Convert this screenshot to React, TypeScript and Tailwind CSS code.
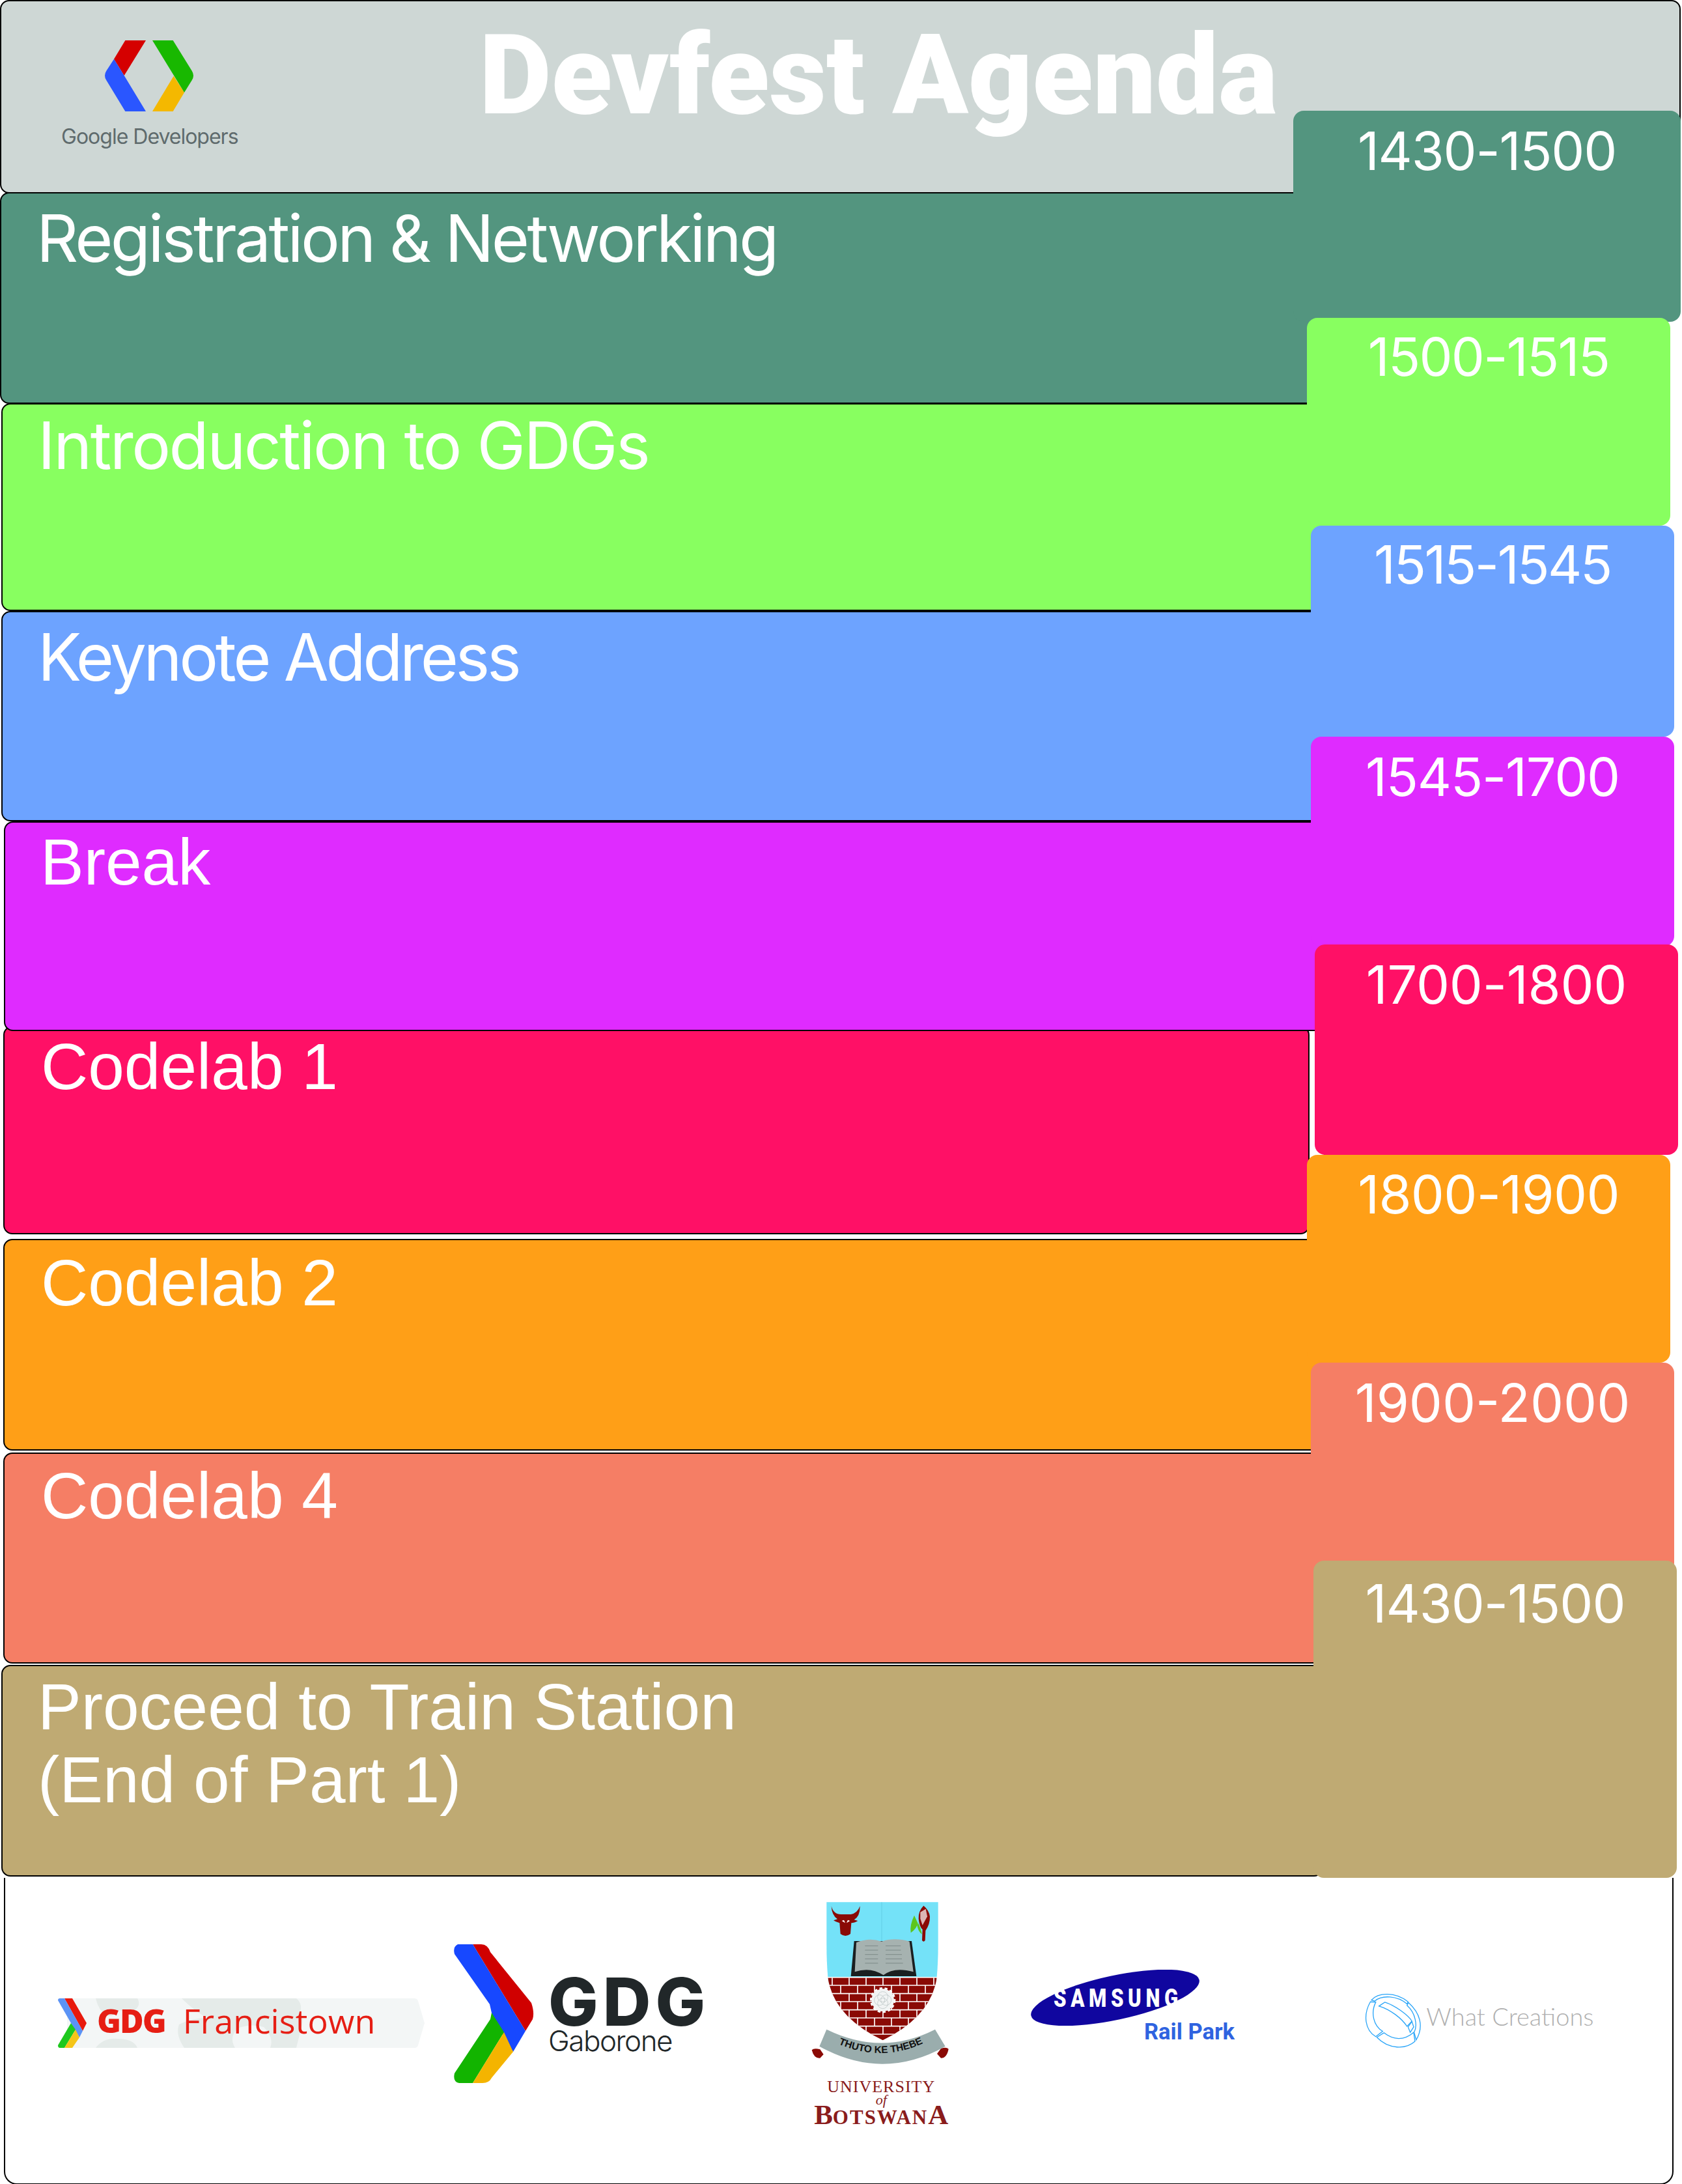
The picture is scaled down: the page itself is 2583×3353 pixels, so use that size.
import React from "react";

const prod = "font-['Inter',sans-serif]";
const arial = "font-['Liberation_Sans',Arial,sans-serif]";

function GoogleDevLogo() {
  return (
    <svg width="340" height="145" viewBox="0 0 1020 435" className="block">
      <path d="M397 96H492L392 258L345 182Z" fill="#D50000" />
      <path d="M345 182L392 258L492 423H397L310 280Q296 258 310 236Z" fill="#2A56FF" />
      <path d="M620 260L669 336L617 423H522Z" fill="#F4B800" />
      <path d="M522 96H617L704 236Q718 258 704 280L669 336Z" fill="#18B800" />
    </svg>
  );
}

function FrancisBanner() {
  return (
    <div className="relative w-[563px] h-[76px] flex items-center">
      <svg width="563" height="76" viewBox="0 0 563 76" className="absolute left-0 top-0">
        <path d="M14 0H547Q552 0 553 4L563 38L553 72Q552 76 547 76H14Z" fill="#F3F6F6" />
        <path d="M58 0H122Q128 10 118 18Q104 22 94 18Q84 30 74 26Q62 18 58 0ZM58 76Q70 60 92 62Q116 62 122 76Z" fill="#E5EBE9" />
        <path d="M190 0H366Q376 8 372 22Q378 30 374 44L366 76H326Q332 60 316 44Q296 38 276 46Q262 60 272 76H194Q180 56 186 40Q206 30 228 30Q206 16 190 0Z" fill="#E5EBE9" />
        <path d="M10 0H22L44 38L38 50Z" fill="#E8190C" />
        <path d="M0 3Q0 0 3 0H10L38 50L33 60L20 38Z" fill="#5B93F5" />
        <path d="M20 38L27 48L10 76H3Q0 76 0 72Z" fill="#1EC81E" />
        <path d="M27 48L33 60L22 76H10Z" fill="#F5C518" />
      </svg>
      <span className="relative ml-[60px] mb-[8px] font-['Open_Sans',sans-serif] font-extrabold text-[50px] leading-[60px] text-[#E61E14] tracking-[-2px]">GDG</span>
      <span className="relative ml-[27px] mb-[8px] font-['Open_Sans',sans-serif] text-[52px] leading-[60px] text-[#E61E14] tracking-[0.2px]">Francistown</span>
    </div>
  );
}

function GdgChevron() {
  return (
    <svg width="123" height="213" viewBox="0 0 123 213" className="block shrink-0">
      <path d="M29 0H42Q52 0 56 12L119 90Q124 105 121 115L110 133Z" fill="#D00000" />
      <path d="M6 0H29L110 133L91 165L60 115Q58 105 55 92L1 15Q-2 4 6 0Z" fill="#1748FF" />
      <path d="M58 105L77 135L29 213H8Q-2 211 1 198L56 115Z" fill="#12B400" />
      <path d="M77 135L91 165L58 205Q54 213 44 213H29Z" fill="#F4B400" />
    </svg>
  );
}

const brickRows = [410, 447, 485, 522, 560, 597, 635, 672];

function Crest() {
  return (
    <svg width="300" height="280" viewBox="0 0 900 840" className="block">
      <defs>
        <clipPath id="shieldLow">
          <path d="M214 412H716Q690 590 467 700Q240 590 214 412Z" />
        </clipPath>
        <path id="mottoPath" d="M235 705Q465 815 680 700" fill="none" />
      </defs>
      <path d="M208 64H722V260Q722 340 716 408H214Q208 340 208 260Z" fill="#74E2F8" />
      <line x1="462" y1="64" x2="462" y2="245" stroke="#5CC4DC" strokeWidth="2" />
      <path d="M230 82Q240 122 278 120H320Q350 115 362 82Q362 130 335 145L352 150Q335 160 322 160L318 210Q295 228 272 210L268 160Q250 155 240 148L258 142Q232 125 230 82Z" fill="#8A0A05" />
      <path d="M278 150L294 160L288 146ZM316 150L300 160L306 146Z" fill="#FFFFFF" />
      <path d="M612 125Q590 170 596 205Q625 185 628 160ZM625 170Q630 200 648 212Q640 180 630 160Z" fill="#5CC61E" />
      <path d="M655 80Q630 105 632 140Q635 175 650 190L648 240Q655 250 662 240L664 195Q685 165 684 130Q680 100 655 80Z" fill="#8A0A05" />
      <path d="M640 110L665 95L672 130L650 170L640 140Z" fill="#F0E0E0" opacity="0.8" />
      <path d="M335 243H600L622 405H320Z" fill="#1A1F20" />
      <path d="M345 250Q405 225 462 245Q520 225 590 245L608 385Q520 360 470 400Q410 360 338 385Z" fill="#A6B2B0" />
      <path d="M385 265H445M385 285H445M385 305H445M385 325H445M385 345H445M480 265H550M480 285H550M480 305H555M480 325H555M480 345H560" stroke="#7D8A88" strokeWidth="3" />
      <g clipPath="url(#shieldLow)">
        <rect x="200" y="405" width="530" height="300" fill="#8A0A05" />
        {brickRows.map((y) => (
          <line key={y} x1="200" y1={y} x2="730" y2={y} stroke="#FFFFFF" strokeWidth="5" />
        ))}
        {brickRows.slice(0, -1).map((y, i) =>
          [0, 1, 2, 3, 4, 5, 6, 7].map((n) => {
            const x = (i % 2 === 0 ? 234 : 195) + n * 78;
            return <line key={`${y}-${n}`} x1={x} y1={y} x2={x} y2={brickRows[i + 1]} stroke="#FFFFFF" strokeWidth="5" />;
          })
        )}
      </g>
      <circle cx="467" cy="515" r="50" fill="#FFFFFF" stroke="#FFFFFF" strokeWidth="18" strokeDasharray="12 10" />
      <circle cx="467" cy="515" r="52" fill="#F2F4F4" />
      <g fill="none" stroke="#B5BFBF" strokeWidth="2">
        <circle cx="467" cy="500" r="24" />
        <circle cx="467" cy="530" r="24" />
        <circle cx="452" cy="515" r="24" />
        <circle cx="482" cy="515" r="24" />
      </g>
      <path d="M140 745Q150 735 178 742L194 765L178 782Q150 785 140 745ZM770 740Q760 730 735 738L717 762L735 782Q762 782 770 740Z" fill="#8A0A05" />
      <path d="M208 650Q462 775 708 650L755 728Q465 890 175 728Z" fill="#9AADAD" />
      <text className="font-['Liberation_Sans',sans-serif] font-bold" fontSize="46" fill="#111111">
        <textPath href="#mottoPath" startOffset="50%" textAnchor="middle">THUTO KE THEBE</textPath>
      </text>
    </svg>
  );
}

function SamsungLogo() {
  return (
    <svg width="330" height="116" viewBox="0 0 330 116" className="block">
      <ellipse cx="129.5" cy="43" rx="132" ry="34" transform="rotate(-12 129.5 43)" fill="#10069F" />
      <text transform="translate(35 57) scale(0.8 1)" textLength="239" lengthAdjust="spacing" fontSize="39" fontWeight="900" fill="#FFFFFF" className="font-['Roboto',sans-serif]">SAMSUNG</text>
      <text x="174" y="107" textLength="139" lengthAdjust="spacingAndGlyphs" fontSize="35" fontWeight="700" fill="#2F63E0" className="font-['Roboto',sans-serif]">Rail Park</text>
    </svg>
  );
}

function WhatRing() {
  return (
    <svg width="87" height="84" viewBox="140 168 262 254" className="block shrink-0" fill="none" stroke="#2AA5F8" strokeWidth="4">
      <path d="M170 200C200 165 280 160 340 208L335 218C290 180 220 175 185 205Z" />
      <path d="M165 208C130 270 140 340 190 370L222 345C180 320 165 260 190 210Z" />
      <path d="M195 373C250 430 330 430 372 392L366 350C320 390 270 385 228 352Z" />
      <path d="M342 212C395 260 415 320 378 385L368 350C385 320 375 260 335 225Z" />
      <path d="M205 228L232 210C280 225 340 270 358 298L335 322C310 285 260 245 205 228Z" />
      <path d="M340 325L358 300L366 325L350 350Z" />
    </svg>
  );
}

const rows = [
  { t: "Registration & Networking", bg: "bg-[#53957F]", cls: `ml-0 h-[325px] pt-[13px] pl-[54px] tracking-[-3.7px] ${prod}` },
  { t: "Introduction to GDGs", bg: "bg-[#88FF60]", cls: `ml-[2px] h-[319px] -mt-px pt-[7px] pl-[54px] tracking-[-2.6px] ${prod}` },
  { t: "Keynote Address", bg: "bg-[#6DA3FF]", cls: `ml-[2px] h-[323px] pt-[13px] pl-[54px] tracking-[-4.4px] ${prod}` },
  { t: "Break", bg: "bg-[#DF2BFF]", cls: `ml-[6px] h-[322px] pt-[4px] pl-[54px] relative z-10 ${arial}` },
  { t: "Codelab 1", bg: "bg-[#FF1066]", cls: `ml-[5px] h-[320px] -mt-[8px] pt-[4px] pl-[56px] w-[2006px]! ${arial}` },
  { t: "Codelab 2", bg: "bg-[#FF9F17]", cls: `ml-[5px] h-[325px] mt-[7px] pt-[9px] pl-[56px] ${arial}` },
  { t: "Codelab 4", bg: "bg-[#F57E65]", cls: `ml-[5px] h-[324px] mt-[3px] pt-[8px] pl-[56px] ${arial}` },
  { t: "Proceed to Train Station\n(End of Part 1)", bg: "bg-[#BFAA73]", cls: `ml-[2px] h-[325px] mt-[2px] pt-[6px] pl-[54px] ${arial}` },
];

const chips = [
  { t: "1430-1500", bg: "bg-[#53957F]", cls: "ml-0 w-[595px] h-[324px] -mt-[125px] pt-[12px] tracking-[-1.2px]" },
  { t: "1500-1515", bg: "bg-[#88FF60]", cls: "ml-[21px] w-[558px] h-[319px] -mt-[6px] pt-[10px] tracking-[-1.7px]" },
  { t: "1515-1545", bg: "bg-[#6DA3FF]", cls: "ml-[27px] w-[558px] h-[324px] pt-[10px] tracking-[-2.4px]" },
  { t: "1545-1700", bg: "bg-[#DF2BFF]", cls: "ml-[27px] w-[558px] h-[322px] pt-[12px] tracking-[-1.2px]" },
  { t: "1700-1800", bg: "bg-[#FF1066]", cls: "ml-[33px] w-[558px] h-[323px] -mt-[3px] pt-[12px] tracking-[-0.2px]" },
  { t: "1800-1900", bg: "bg-[#FF9F17]", cls: "ml-[21px] w-[558px] h-[319px] pt-[11px] tracking-[-0.7px]" },
  { t: "1900-2000", bg: "bg-[#F57E65]", cls: "ml-[27px] w-[558px] h-[323px] pt-[12px]" },
  { t: "1430-1500", bg: "bg-[#BFAA73]", cls: "ml-[31px] w-[558px] h-[487px] -mt-[19px] pt-[16px] tracking-[-1px]" },
];

export default function App() {
  return (
    <div className="w-[2583px] h-[3353px] bg-white overflow-hidden">
      <header className="w-[2581px] h-[297px] -mb-[2px] bg-[#CED7D5] border-2 border-black rounded-[14px] flex items-start">
        <div className="ml-[58px] mt-[28px] w-[340px] shrink-0 flex flex-col">
          <GoogleDevLogo />
          <div className={`${prod} mt-[16px] ml-[34px] text-[32px] leading-[38px] tracking-[-1px] text-[#5F6B6D] whitespace-nowrap`}>Google Developers</div>
        </div>
        <h1 className="ml-[336px] mt-[14px] font-['Roboto',sans-serif] font-black text-[171px] leading-[200px] text-white whitespace-nowrap">Devfest Agenda</h1>
      </header>

      <div className="flex items-start">
        <div className="w-[1986px] shrink-0 flex flex-col">
          {rows.map((r) => (
            <div
              key={r.t}
              className={`w-[2030px] border-2 border-black rounded-[14px] text-white text-[100px] leading-[112px] whitespace-pre ${r.bg} ${r.cls}`}
            >
              {r.t}
            </div>
          ))}
        </div>
        <div className="relative z-20 w-[597px] shrink-0 flex flex-col">
          {chips.map((c, i) => (
            <div
              key={i}
              className={`rounded-[16px] text-white text-center ${prod} font-normal text-[81px] leading-[100px] ${c.bg} ${c.cls}`}
            >
              {c.t}
            </div>
          ))}
        </div>
      </div>

      <footer className="ml-[6px] w-[2564px] h-[471px] bg-white border-x-2 border-b-2 border-black rounded-b-[20px] flex items-start">
        <div className="ml-[81px] mt-[185px] shrink-0">
          <FrancisBanner />
        </div>
        <div className="ml-[45px] mt-[102px] shrink-0 flex items-start">
          <GdgChevron />
          <div className="ml-[22px] mt-[50px] flex flex-col">
            <span className={`${prod} font-extrabold text-[102px] leading-[76px] tracking-[7px] text-[#212729]`}>GDG</span>
            <span className={`${prod} font-light text-[44px] leading-[44px] tracking-[-1.5px] text-[#212729]`}>Gaborone</span>
          </div>
        </div>
        <div className="ml-[110px] mt-[16px] w-[300px] shrink-0 flex flex-col items-center font-['Liberation_Serif',serif] text-[#8A1C1C]">
          <Crest />
          <div className="ml-[6px] mt-[14px] text-[26px] leading-[22px] tracking-[1px] whitespace-nowrap">UNIVERSITY</div>
          <div className="ml-[6px] italic text-[22px] leading-[18px]">of</div>
          <div className="ml-[6px] text-[43px] leading-[28px] whitespace-nowrap font-semibold">
            B<span className="text-[31px] tracking-[2px]">OTSWAN</span>A
          </div>
        </div>
        <div className="ml-[83px] mt-[141px] shrink-0">
          <SamsungLogo />
        </div>
        <div className="ml-[183px] mt-[177px] shrink-0 flex items-start">
          <WhatRing />
          <span className="ml-[7px] mt-[12px] font-['Lato',sans-serif] font-light text-[38px] leading-[46px] text-[#B0B0B0] whitespace-nowrap">What Creations</span>
        </div>
      </footer>
    </div>
  );
}
